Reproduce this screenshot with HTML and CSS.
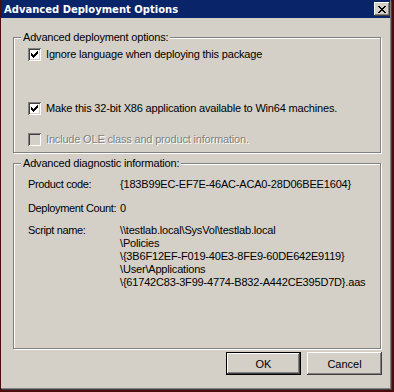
FILE: index.html
```
<!DOCTYPE html>
<html lang="en">
<head>
    <meta charset="UTF-8">
    <meta name="viewport" content="width=device-width, initial-scale=1.0">
    <title>Advanced Deployment Options</title>
    <link rel="stylesheet" href="styles.css">
</head>
<body>
    <div class="window">
        <div class="titlebar">
            <span class="title">Advanced Deployment Options</span>
            <button class="close-btn" title="Close">
                <svg width="8" height="7" viewBox="0 0 8 7" shape-rendering="crispEdges">
                    <path d="M0 0h2v1h-2z M1 1h2v1h-2z M2 2h4v1h-4z M3 3h2v1h-2z M2 4h4v1h-4z M1 5h2v1h-2z M0 6h2v1h-2z M6 0h2v1h-2z M5 1h2v1h-2z M5 5h2v1h-2z M6 6h2v1h-2z" fill="#000"/>
                </svg>
            </button>
        </div>

        <div class="dialog-body">
            <fieldset class="group group-options">
                <legend>Advanced deployment options:</legend>
                <label class="check-row row-ignore">
                    <span class="checkbox">
                        <svg width="7" height="7" viewBox="0 0 7 7" shape-rendering="crispEdges"><path d="M6 0h1v3h-1z M5 1h1v3h-1z M4 2h1v3h-1z M3 3h1v3h-1z M2 4h1v3h-1z M1 3h1v3h-1z M0 2h1v3h-1z" fill="#000"/></svg>
                    </span>
                    Ignore language when deploying this package
                </label>
                <label class="check-row row-win64">
                    <span class="checkbox">
                        <svg width="7" height="7" viewBox="0 0 7 7" shape-rendering="crispEdges"><path d="M6 0h1v3h-1z M5 1h1v3h-1z M4 2h1v3h-1z M3 3h1v3h-1z M2 4h1v3h-1z M1 3h1v3h-1z M0 2h1v3h-1z" fill="#000"/></svg>
                    </span>
                    Make this 32-bit X86 application available to Win64 machines.
                </label>
                <label class="check-row row-ole disabled">
                    <span class="checkbox"></span>
                    Include OLE class and product information.
                </label>
            </fieldset>

            <fieldset class="group group-diag">
                <legend>Advanced diagnostic information:</legend>
                <div class="info-row row-product">
                    <div class="info-label">Product code:</div>
                    <div class="info-value">{183B99EC-EF7E-46AC-ACA0-28D06BEE1604}</div>
                </div>
                <div class="info-row row-count">
                    <div class="info-label">Deployment Count:</div>
                    <div class="info-value">0</div>
                </div>
                <div class="info-row row-script">
                    <div class="info-label">Script name:</div>
                    <div class="info-value">\\testlab.local\SysVol\testlab.local<br>\Policies<br>\{3B6F12EF-F019-40E3-8FE9-60DE642E9119}<br>\User\Applications<br>\{61742C83-3F99-4774-B832-A442CE395D7D}.aas</div>
                </div>
            </fieldset>

            <div class="button-row">
                <button class="btn btn-default">OK</button>
                <button class="btn">Cancel</button>
            </div>
        </div>
    </div>
</body>
</html>
```

FILE: styles.css
```
body {
    margin: 0;
    width: 394px;
    height: 392px;
    overflow: hidden;
    background: #4a0c0c;
    font-family: "Liberation Sans", Arial, sans-serif;
    font-size: 11px;
    letter-spacing: -0.18px;
    color: #000;
}

.window {
    margin-left: 1px;
    width: 389px;
    height: 388px;
    background: #d4d0c8;
    border-right: 1px solid #808080;
    border-bottom: 1px solid #808080;
    box-shadow: 1px 1px 0 #404040;
}

.titlebar {
    display: flex;
    justify-content: space-between;
    align-items: center;
    height: 18px;
    padding-left: 3px;
    background: #0a246a;
    color: white;
}

.title {
    font-family: "DejaVu Sans", Verdana, sans-serif;
    font-weight: bold;
    font-size: 10px;
    letter-spacing: 0;
}

.close-btn {
    display: flex;
    align-items: center;
    justify-content: center;
    width: 16px;
    height: 14px;
    padding: 0;
    border: none;
    background: #d4d0c8;
    box-shadow: inset -1px -1px 0 #404040, inset 1px 1px 0 #fff, inset -2px -2px 0 #808080;
}

.dialog-body {
    padding: 13px 0 0 12px;
}

.group {
    width: 368px;
    margin: 0;
    padding: 0 0 0 14px;
    border: 1px solid #808080;
    box-shadow: inset 1px 1px 0 #fff, 1px 1px 0 #fff;
    box-sizing: border-box;
    min-width: 0;
}

.group legend {
    margin-left: -7px;
    padding: 0 2px;
    line-height: 12px;
    background: #d4d0c8;
}

.group-options {
    padding-bottom: 6px;
}

.check-row {
    display: flex;
    align-items: center;
    gap: 5px;
    height: 13px;
    line-height: 13px;
}

.row-ignore { margin-top: 5px; }
.row-win64 { margin-top: 41px; }
.row-ole { margin-top: 18px; }

.checkbox {
    display: flex;
    align-items: center;
    justify-content: center;
    width: 13px;
    height: 13px;
    flex: none;
    background: #fff;
    box-sizing: border-box;
    box-shadow: inset 1px 1px 0 #808080, inset -1px -1px 0 #fff, inset 2px 2px 0 #404040, inset -2px -2px 0 #d4d0c8;
}

.disabled {
    color: #808080;
    text-shadow: 1px 1px 0 #fff;
}

.disabled .checkbox {
    background: #d4d0c8;
}

.group-diag {
    margin-top: 4px;
    padding-bottom: 59px;
}

.info-row {
    display: grid;
    grid-template-columns: 92px 1fr;
    line-height: 13px;
}

.info-label {
    white-space: nowrap;
    letter-spacing: -0.35px;
}

.row-product { margin-top: 9px; }
.row-count { margin-top: 11px; }
.row-script { margin-top: 9px; }

.button-row {
    display: flex;
    justify-content: flex-end;
    gap: 6px;
    margin-top: 3px;
    padding-right: 8px;
}

.btn {
    width: 75px;
    height: 23px;
    padding: 0;
    border: none;
    background: #d4d0c8;
    font-family: "Liberation Sans", Arial, sans-serif;
    font-size: 11px;
    color: #000;
    box-shadow: inset -1px -1px 0 #404040, inset 1px 1px 0 #fff, inset -2px -2px 0 #808080;
}

.btn-default {
    border: 1px solid #000;
}
```
